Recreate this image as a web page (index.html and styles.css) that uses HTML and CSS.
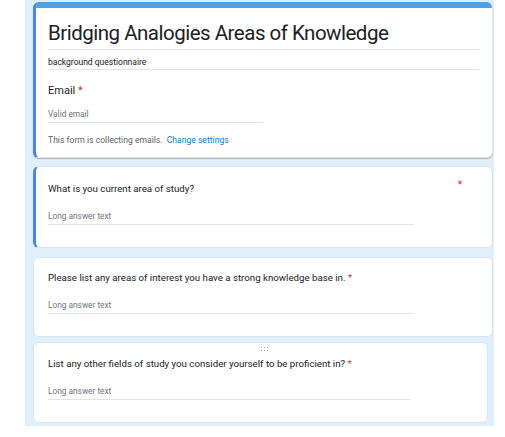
FILE: index.html
```html
<!DOCTYPE html>
<html>
<head>
<meta charset="utf-8">
<link rel="stylesheet" href="styles.css">
</head>
<body>
<div class="canvas">
  <div class="column">
    <div class="card header-card">
      <div class="topbar"></div>
      <div class="card-body head-body">
        <div class="title">Bridging Analogies Areas of Knowledge</div>
        <div class="desc">background questionnaire</div>
        <div class="email-label">Email <span class="req">*</span></div>
        <div class="field short">Valid email</div>
        <div class="note">This form is collecting emails. <span class="link">Change settings</span></div>
      </div>
    </div>

    <div class="card q-card active c2">
      <div class="q-row">
        <div class="question">What is you current area of study?</div>
        <span class="req side">*</span>
      </div>
      <div class="field long">Long answer text</div>
    </div>

    <div class="card q-card c3">
      <div class="question">Please list any areas of interest you have a strong knowledge base in. <span class="req">*</span></div>
      <div class="field long">Long answer text</div>
    </div>

    <div class="card q-card c4">
      <div class="handle">
        <svg width="7" height="4" viewBox="0 0 7 4"><g fill="#9aa0a6"><rect x="0" y="0" width="1" height="1"/><rect x="3" y="0" width="1" height="1"/><rect x="6" y="0" width="1" height="1"/><rect x="0" y="3" width="1" height="1"/><rect x="3" y="3" width="1" height="1"/><rect x="6" y="3" width="1" height="1"/></g></svg>
      </div>
      <div class="question">List any other fields of study you consider yourself to be proficient in? <span class="req">*</span></div>
      <div class="field long narrow">Long answer text</div>
    </div>
  </div>
</div>
</body>
</html>
```

FILE: styles.css
```css
* { box-sizing: border-box; }
html, body { margin: 0; padding: 0; background: #fff; }
body { font-family: Roboto, "Noto Sans", Arial, sans-serif; color: #202124; }

.canvas { width: 505px; height: 437px; background: #fff; }
.column {
  margin-left: 25px;
  width: 469px;
  height: 426px;
  background: #e1effb;
  padding: 2px 1px 0 8px;
  display: flex;
  flex-direction: column;
}

.card {
  background: #fff;
  border-radius: 6px;
  border: 1px solid #dde3ea;
  position: relative;
  overflow: hidden;
}

.header-card {
  height: 156px;
  border-left: 3px solid #4a86ea;
  box-shadow: 0 1px 1px rgba(60,64,67,0.35);
  border-top: none;
}
.topbar { height: 6px; background: #4aa3ea; margin-left: -3px; }
.head-body { padding: 10px 13px 0 12px; }

.title {
  font-family: Roboto, "Open Sans", sans-serif;
  font-size: 20.5px;
  letter-spacing: -0.5px;
  line-height: 30px;
  color: #202124;
  padding-bottom: 1px;
  border-bottom: 1px solid #e3e3e3;
}
.desc {
  font-size: 8.5px;
  line-height: 12px;
  padding: 6px 0 1px;
  border-bottom: 1px solid #e3e3e3;
}
.email-label {
  font-size: 11px;
  margin-top: 14px;
  line-height: 14px;
}
.req { color: #d93025; }

.field {
  font-size: 8.3px;
  color: #70757a;
  border-bottom: 1px solid #e3e3e3;
  padding-bottom: 3px;
  line-height: 10px;
}
.field.short { width: 215px; margin-top: 11px; }
.note { font-size: 8.6px; color: #5f6368; margin-top: 12px; line-height: 10px; }
.link { color: #1a73e8; margin-left: 2px; }

.q-card { padding: 0 0 0 14px; }
.q-card .question { font-size: 9.7px; line-height: 12px; color: #202124; }
.q-card .field.long { width: 366px; margin-top: 16px; }
.q-card .field.narrow { width: 363px; }

.c2 { margin-top: 8px; height: 82px; border-left: 3px solid #4a86ea; padding-left: 12px; padding-top: 16px; }
.q-row { display: flex; align-items: flex-start; }
.q-row .question { flex: 1; }
.req.side { font-size: 10px; margin-right: 30px; margin-top: -4px; }

.c3 { margin-top: 9px; height: 80px; padding-top: 14px; }
.c4 { margin-top: 5px; height: 81px; width: 455px; padding-top: 4px; }
.handle { display: flex; justify-content: center; height: 8px; padding-right: 6px; }
.handle svg { display: block; }
.c4 .question { margin-top: 3px; }
```
